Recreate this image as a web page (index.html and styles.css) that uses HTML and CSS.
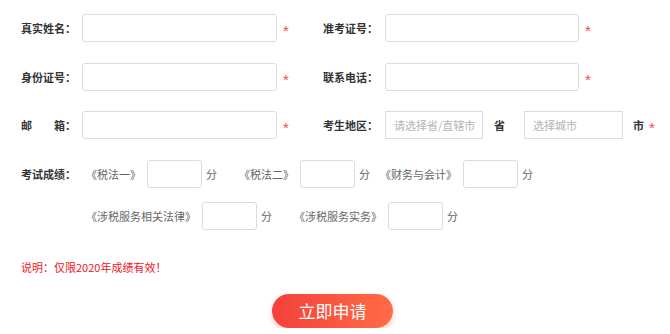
FILE: index.html
```html
<!DOCTYPE html>
<html lang="zh-CN">
<head>
<meta charset="utf-8">
<title>报名表</title>
<link rel="stylesheet" href="styles.css">
</head>
<body>
<form class="form">
  <div class="row">
    <div class="field field-left">
      <label class="label">真实姓名：</label>
      <input class="input" type="text">
      <span class="req">*</span>
    </div>
    <div class="field">
      <label class="label label-right">准考证号：</label>
      <input class="input input-right" type="text">
      <span class="req">*</span>
    </div>
  </div>
  <div class="row row-tight">
    <div class="field field-left">
      <label class="label">身份证号：</label>
      <input class="input" type="text">
      <span class="req">*</span>
    </div>
    <div class="field">
      <label class="label label-right">联系电话：</label>
      <input class="input input-right" type="text">
      <span class="req">*</span>
    </div>
  </div>
  <div class="row">
    <div class="field field-left">
      <label class="label">邮&emsp;&emsp;箱：</label>
      <input class="input" type="text">
      <span class="req">*</span>
    </div>
    <div class="field">
      <label class="label label-right">考生地区：</label>
      <select class="select select-prov"><option>请选择省/直辖市</option></select>
      <span class="unit-bold unit-prov">省</span>
      <select class="select select-city"><option>选择城市</option></select>
      <span class="unit-bold unit-city">市</span>
      <span class="req req-city">*</span>
    </div>
  </div>
  <div class="score-row">
    <label class="label label-score">考试成绩：</label>
    <span class="subject">《税法一》</span>
    <input class="score-input" type="text">
    <span class="unit unit-gap-l">分</span>
    <span class="subject">《税法二》</span>
    <input class="score-input" type="text">
    <span class="unit unit-gap-s">分</span>
    <span class="subject">《财务与会计》</span>
    <input class="score-input" type="text">
    <span class="unit">分</span>
  </div>
  <div class="score-row score-row-indent">
    <span class="subject">《涉税服务相关法律》</span>
    <input class="score-input" type="text">
    <span class="unit unit-gap-l">分</span>
    <span class="subject">《涉税服务实务》</span>
    <input class="score-input" type="text">
    <span class="unit">分</span>
  </div>
  <p class="note">说明：仅限2020年成绩有效！</p>
  <button class="submit" type="button">立即申请</button>
</form>
</body>
</html>
```

FILE: styles.css
```css
html, body {
  margin: 0;
  padding: 0;
  background: #ffffff;
}

body {
  font-family: "Noto Sans CJK SC", "Noto Sans", sans-serif;
  color: #333333;
}

.form {
  padding: 14px 0 0 21px;
}

.row {
  display: flex;
  align-items: center;
  height: 28px;
  margin-bottom: 21px;
}

.row-tight {
  margin-bottom: 20px;
}

.field {
  display: flex;
  align-items: center;
  height: 28px;
}

.field-left {
  width: 302px;
}

.label {
  width: 61px;
  flex: none;
  font-size: 11px;
  line-height: 14px;
  font-weight: bold;
  color: #333333;
  white-space: nowrap;
}

.label-right {
  width: 62px;
}

.label-score {
  width: 65px;
}

.input {
  box-sizing: border-box;
  width: 195px;
  height: 28px;
  border: 1px solid #dcdcdc;
  border-radius: 3px;
  background: #ffffff;
  outline: none;
  padding: 0 8px;
  font-family: inherit;
}

.input-right {
  width: 194px;
}

.req {
  margin-left: 6px;
  padding-top: 4px;
  font-size: 15px;
  line-height: 15px;
  color: #f5474a;
  font-family: "Liberation Sans", sans-serif;
}

.req-city {
  margin-left: 5px;
}

.select {
  box-sizing: border-box;
  height: 28px;
  -webkit-appearance: none;
  appearance: none;
  border: 1px solid #dcdcdc;
  border-radius: 0;
  background: #ffffff;
  padding: 0 0 0 8px;
  font-family: inherit;
  font-size: 11px;
  color: #b4b4b4;
  outline: none;
}

.select-prov {
  width: 98px;
}

.select-city {
  width: 99px;
}

.unit-bold {
  font-size: 11px;
  line-height: 14px;
  font-weight: bold;
  color: #333333;
}

.unit-prov {
  margin: 0 19px 0 11px;
}

.unit-city {
  margin-left: 10px;
}

.score-row {
  display: flex;
  align-items: center;
  height: 28px;
  margin-bottom: 14px;
}

.score-row-indent {
  padding-left: 65px;
}

.subject {
  font-size: 11px;
  line-height: 14px;
  color: #666666;
  white-space: nowrap;
}

.score-input {
  box-sizing: border-box;
  width: 55px;
  height: 28px;
  margin-left: 6px;
  border: 1px solid #dcdcdc;
  border-radius: 3px;
  background: #ffffff;
  outline: none;
  font-family: inherit;
}

.unit {
  margin-left: 4px;
  font-size: 11px;
  line-height: 14px;
  color: #666666;
}

.unit-gap-l {
  margin-right: 22px;
}

.unit-gap-s {
  margin-right: 10px;
}

.note {
  margin: 30px 0 0 0;
  font-size: 11px;
  line-height: 14px;
  color: #f0141e;
}

.submit {
  display: block;
  width: 121px;
  height: 34px;
  margin: 20px 0 0 251px;
  padding: 0;
  border: none;
  border-radius: 17px;
  background: linear-gradient(90deg, #f4403b 0%, #ff6c46 100%);
  box-shadow: 0 3px 6px rgba(245, 80, 60, 0.3);
  color: #ffffff;
  font-family: inherit;
  font-size: 17px;
  line-height: 34px;
  cursor: pointer;
}
```
